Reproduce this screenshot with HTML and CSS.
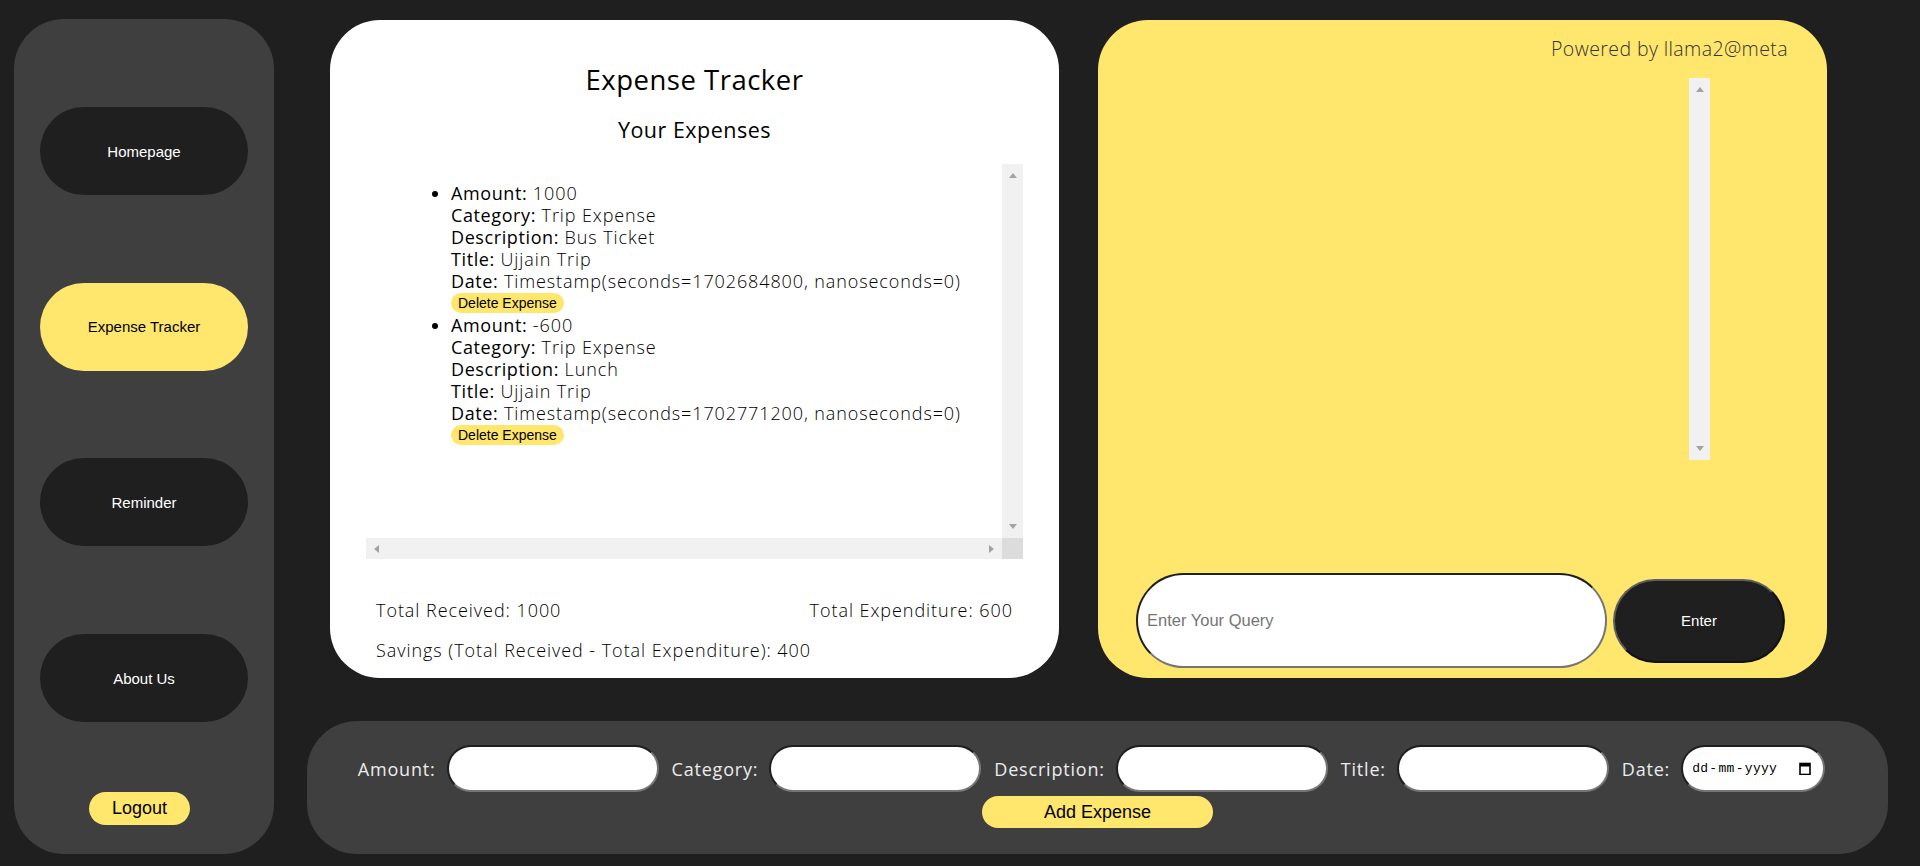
FILE: index.html
```html
<!DOCTYPE html>
<html lang="en">
<head>
<meta charset="utf-8">
<title>Expense Tracker</title>
<link rel="stylesheet" href="styles.css">
</head>
<body>
<div class="app">
  <aside class="sidebar">
    <nav class="nav">
      <button class="nav-btn">Homepage</button>
      <button class="nav-btn active">Expense Tracker</button>
      <button class="nav-btn">Reminder</button>
      <button class="nav-btn">About Us</button>
    </nav>
    <button class="logout">Logout</button>
  </aside>

  <main class="main">
    <div class="top-row">
      <section class="card expenses">
        <h1 class="title">Expense Tracker</h1>
        <h2 class="subtitle">Your Expenses</h2>
        <div class="scrollbox">
          <div class="scroll-content">
            <ul class="expense-list">
              <li>
                <div class="line"><strong>Amount:</strong> 1000</div>
                <div class="line"><strong>Category:</strong> Trip Expense</div>
                <div class="line"><strong>Description:</strong> Bus Ticket</div>
                <div class="line"><strong>Title:</strong> Ujjain Trip</div>
                <div class="line"><strong>Date:</strong> Timestamp(seconds=1702684800, nanoseconds=0)</div>
                <div class="line"><button class="delete">Delete Expense</button></div>
              </li>
              <li>
                <div class="line"><strong>Amount:</strong> -600</div>
                <div class="line"><strong>Category:</strong> Trip Expense</div>
                <div class="line"><strong>Description:</strong> Lunch</div>
                <div class="line"><strong>Title:</strong> Ujjain Trip</div>
                <div class="line"><strong>Date:</strong> Timestamp(seconds=1702771200, nanoseconds=0)</div>
                <div class="line"><button class="delete">Delete Expense</button></div>
              </li>
            </ul>
          </div>
          <div class="vbar"><span class="arrow up"></span><span class="arrow down"></span></div>
          <div class="hbar"><span class="arrow left"></span><span class="arrow right"></span></div>
          <div class="corner"></div>
        </div>
        <div class="totals">
          <div class="totals-row">
            <span>Total Received: 1000</span>
            <span>Total Expenditure: 600</span>
          </div>
          <p class="savings">Savings (Total Received - Total Expenditure): 400</p>
        </div>
      </section>

      <section class="card chat">
        <p class="powered">Powered by llama2@meta</p>
        <div class="chat-log">
          <div class="chat-messages"></div>
          <div class="vbar"><span class="arrow up"></span><span class="arrow down"></span></div>
        </div>
        <form class="query-row">
          <input class="query" type="text" placeholder="Enter Your Query">
          <button class="enter" type="button">Enter</button>
        </form>
      </section>
    </div>

    <form class="add-form">
      <div class="fields">
        <label class="field-label">Amount:</label>
        <input class="field-input" type="text">
        <label class="field-label">Category:</label>
        <input class="field-input" type="text">
        <label class="field-label">Description:</label>
        <input class="field-input" type="text">
        <label class="field-label">Title:</label>
        <input class="field-input" type="text">
        <label class="field-label">Date:</label>
        <div class="date-field">
          <span class="date-text">dd<span class="sep">-</span>mm<span class="sep">-</span>yyyy</span>
          <svg class="cal-icon" width="12" height="13" viewBox="0 0 12 13">
            <rect x="1" y="1.5" width="10" height="11" fill="none" stroke="#000" stroke-width="1.6"/>
            <rect x="1" y="1.5" width="10" height="3" fill="#000"/>
          </svg>
        </div>
      </div>
      <button class="add-btn" type="button">Add Expense</button>
    </form>
  </main>
</div>
</body>
</html>
```

FILE: styles.css
```css
* {
  box-sizing: border-box;
}

html,
body {
  margin: 0;
  height: 100%;
}

body {
  background: #1f1f1f;
  font-family: "Open Sans", "Noto Sans", sans-serif;
  overflow: hidden;
}

.app {
  display: grid;
  grid-template-columns: 260px 1581px;
  column-gap: 33px;
  padding: 19px 0 0 14px;
}

/* Sidebar */
.sidebar {
  background: #3f3f3f;
  border-radius: 50px;
  height: 835px;
  display: flex;
  flex-direction: column;
  align-items: center;
  padding-top: 88px;
}

.nav {
  display: flex;
  flex-direction: column;
  gap: 87.7px;
}

.nav-btn {
  width: 208px;
  height: 88px;
  border: none;
  border-radius: 44px;
  background: #1f1f1f;
  color: #fff;
  font: 15px "Liberation Sans", Arial, sans-serif;
  cursor: pointer;
}

.nav-btn.active {
  background: #ffe66d;
  color: #000;
}

.logout {
  margin-top: 70px;
  margin-right: 9px;
  width: 101px;
  height: 33px;
  border: none;
  border-radius: 17px;
  background: #ffe66d;
  color: #000;
  font: 18px "Liberation Sans", Arial, sans-serif;
}

/* Main */
.main {
  display: flex;
  flex-direction: column;
}

.top-row {
  display: flex;
  gap: 39px;
  padding-left: 23px;
  margin-top: 1px;
}

.card {
  width: 729px;
  height: 658px;
  border-radius: 50px;
}

.expenses {
  background: #fff;
  padding: 0 36px;
  color: #000;
}

.title {
  margin: 43px 0 0;
  text-align: center;
  font-size: 27.5px;
  line-height: 34px;
  font-weight: 400;
  letter-spacing: 0.5px;
}

.subtitle {
  margin: 20px 0 0;
  text-align: center;
  font-size: 21.5px;
  line-height: 26px;
  font-weight: 400;
  letter-spacing: 0.5px;
}

.scrollbox {
  margin-top: 21px;
  height: 395px;
  display: grid;
  grid-template-columns: 1fr 21px;
  grid-template-rows: 1fr 21px;
}

.scroll-content {
  overflow: hidden;
}

.expense-list {
  margin: 18px 0 0;
  padding-left: 85px;
  font-size: 18px;
  line-height: 22px;
  font-weight: 300;
  letter-spacing: 0.9px;
  color: #000;
}

.expense-list strong {
  font-weight: 500;
  color: #000;
  letter-spacing: 0.6px;
}

.line {
  height: 22px;
  white-space: nowrap;
}

.delete {
  display: inline-block;
  vertical-align: top;
  margin-top: 1px;
  height: 20px;
  padding: 0 7px;
  border: none;
  border-radius: 10px;
  background: #ffe66d;
  color: #000;
  font: 14px/20px "Liberation Sans", Arial, sans-serif;
  letter-spacing: 0;
}

/* fake classic scrollbars */
.vbar {
  background: #f1f1f1;
  display: flex;
  flex-direction: column;
  justify-content: space-between;
  align-items: center;
  padding: 9px 0;
}

.hbar {
  background: #f1f1f1;
  display: flex;
  justify-content: space-between;
  align-items: center;
  padding: 0 8px;
}

.corner {
  background: #dcdcdc;
}

.arrow {
  width: 0;
  height: 0;
}

.arrow.up {
  border-left: 4.5px solid transparent;
  border-right: 4.5px solid transparent;
  border-bottom: 5px solid #a3a3a3;
}

.arrow.down {
  border-left: 4.5px solid transparent;
  border-right: 4.5px solid transparent;
  border-top: 5px solid #a3a3a3;
}

.arrow.left {
  border-top: 4.5px solid transparent;
  border-bottom: 4.5px solid transparent;
  border-right: 5px solid #a3a3a3;
}

.arrow.right {
  border-top: 4.5px solid transparent;
  border-bottom: 4.5px solid transparent;
  border-left: 5px solid #a3a3a3;
}

.totals {
  margin-top: 40px;
  padding: 0 10px;
  font-size: 18px;
  line-height: 22px;
  font-weight: 300;
  letter-spacing: 0.95px;
  color: #000;
}

.totals-row {
  display: flex;
  justify-content: space-between;
}

.savings {
  margin: 18px 0 0;
}

/* Chat card */
.chat {
  background: #ffe66d;
  padding: 0 39px 0 38px;
  display: flex;
  flex-direction: column;
}

.powered {
  margin: 0;
  padding-top: 17px;
  text-align: right;
  font-size: 19.5px;
  line-height: 24px;
  font-weight: 300;
  letter-spacing: 0.4px;
  color: #333;
}

.chat-log {
  margin-top: 17px;
  width: 574px;
  height: 382px;
  display: grid;
  grid-template-columns: 1fr 21px;
}

.query-row {
  margin: 113px 0 0;
  display: flex;
  align-items: center;
  gap: 6px;
}

.query {
  width: 471px;
  height: 95px;
  border-radius: 48px;
  border: 2px solid;
  border-color: #1f1f1f #767676 #767676 #1f1f1f;
  background: #fff;
  padding: 0 9px;
  font: 16.5px "Liberation Sans", Arial, sans-serif;
  outline: none;
}

.query::placeholder {
  color: #757575;
}

.enter {
  width: 172px;
  height: 84px;
  border-radius: 42px;
  border: 2px solid;
  border-color: #5e5e5e #0f0f0f #0f0f0f #5e5e5e;
  background: #1f1f1f;
  color: #fff;
  font: 15px "Liberation Sans", Arial, sans-serif;
}

/* Add expense form */
.add-form {
  margin: 43px 0 0;
  height: 133px;
  background: #3f3f3f;
  border-radius: 50px;
  display: flex;
  flex-direction: column;
  align-items: center;
  padding: 24px 12px 0 0;
}

.fields {
  display: flex;
  align-items: center;
  height: 47px;
}

.field-label {
  margin-right: 11px;
  color: #ececec;
  font-size: 18px;
  letter-spacing: 0.8px;
}

.field-input,
.date-field {
  height: 47px;
  border-radius: 24px;
  border: 2px solid;
  border-color: #1f1f1f #767676 #767676 #1f1f1f;
  background: #fff;
  margin-right: 13px;
}

.field-input {
  width: 212px;
  outline: none;
}

.date-field {
  width: 144px;
  margin-right: 0;
  display: flex;
  align-items: center;
  justify-content: space-between;
  padding: 0 12px 0 9px;
}

.date-text {
  font: 13px "Liberation Mono", monospace;
  letter-spacing: 0.3px;
  color: #000;
}

.sep {
  margin: 0 1px;
}

.cal-icon {
  display: block;
}

.add-btn {
  margin-top: 4px;
  margin-left: 12px;
  width: 231px;
  height: 32px;
  border: none;
  border-radius: 16px;
  background: #ffe66d;
  color: #000;
  font: 18px "Liberation Sans", Arial, sans-serif;
}
```
